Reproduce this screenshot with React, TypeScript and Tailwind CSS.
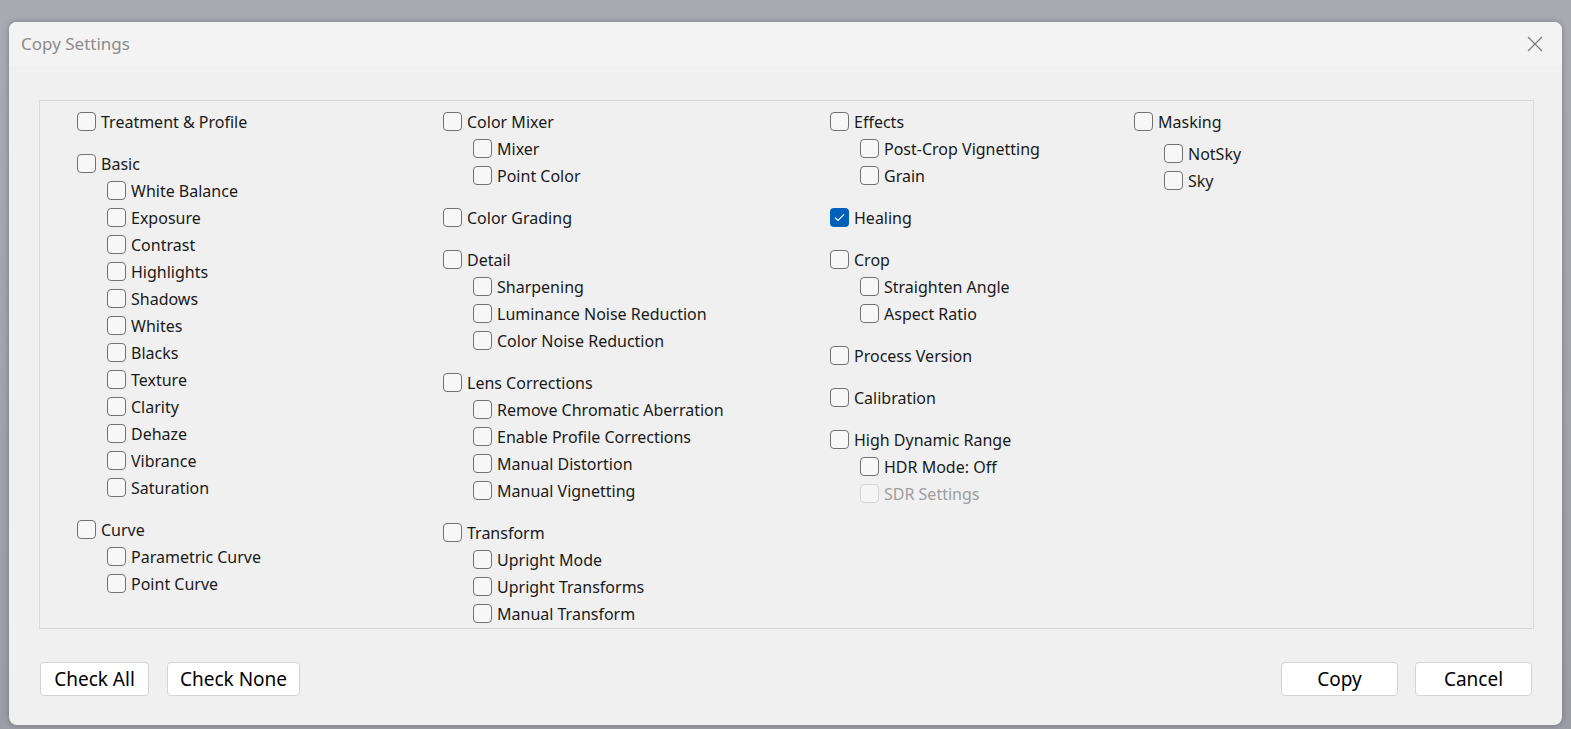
import React from "react";

interface Item {
  label: string;
  checked?: boolean;
  disabled?: boolean;
  children?: Item[];
  childGap?: string;
}

const columns: Item[][] = [
  [
    { label: "Treatment & Profile" },
    {
      label: "Basic",
      children: [
        { label: "White Balance" },
        { label: "Exposure" },
        { label: "Contrast" },
        { label: "Highlights" },
        { label: "Shadows" },
        { label: "Whites" },
        { label: "Blacks" },
        { label: "Texture" },
        { label: "Clarity" },
        { label: "Dehaze" },
        { label: "Vibrance" },
        { label: "Saturation" },
      ],
    },
    {
      label: "Curve",
      children: [{ label: "Parametric Curve" }, { label: "Point Curve" }],
    },
  ],
  [
    {
      label: "Color Mixer",
      children: [{ label: "Mixer" }, { label: "Point Color" }],
    },
    { label: "Color Grading" },
    {
      label: "Detail",
      children: [
        { label: "Sharpening" },
        { label: "Luminance Noise Reduction" },
        { label: "Color Noise Reduction" },
      ],
    },
    {
      label: "Lens Corrections",
      children: [
        { label: "Remove Chromatic Aberration" },
        { label: "Enable Profile Corrections" },
        { label: "Manual Distortion" },
        { label: "Manual Vignetting" },
      ],
    },
    {
      label: "Transform",
      children: [
        { label: "Upright Mode" },
        { label: "Upright Transforms" },
        { label: "Manual Transform" },
      ],
    },
  ],
  [
    {
      label: "Effects",
      children: [{ label: "Post-Crop Vignetting" }, { label: "Grain" }],
    },
    { label: "Healing", checked: true },
    {
      label: "Crop",
      children: [{ label: "Straighten Angle" }, { label: "Aspect Ratio" }],
    },
    { label: "Process Version" },
    { label: "Calibration" },
    {
      label: "High Dynamic Range",
      children: [
        { label: "HDR Mode: Off" },
        { label: "SDR Settings", disabled: true },
      ],
    },
  ],
  [
    {
      label: "Masking",
      childGap: "mt-[5px]",
      children: [{ label: "NotSky" }, { label: "Sky" }],
    },
  ],
];

function CheckBox({ checked, disabled }: { checked?: boolean; disabled?: boolean }) {
  if (checked) {
    return (
      <span className="flex h-[19px] w-[19px] shrink-0 items-center justify-center rounded-[4px] bg-[#005fb8]">
        <svg width="11" height="9" viewBox="0 0 11 9" fill="none">
          <path d="M1 4.6 L4 7.5 L10 1.3" stroke="white" strokeWidth="1.1" />
        </svg>
      </span>
    );
  }
  return (
    <span
      className={
        disabled
          ? "h-[19px] w-[19px] shrink-0 rounded-[4px] border border-[#d4d4d4] bg-[#f5f5f5]"
          : "h-[19px] w-[19px] shrink-0 rounded-[4px] border border-[#727272] bg-[#f7f7f7]"
      }
    />
  );
}

function Row({ item }: { item: Item }) {
  return (
    <div className="flex h-[27px] items-center gap-[5px]">
      <CheckBox checked={item.checked} disabled={item.disabled} />
      <span className={item.disabled ? "text-[#9d9d9d]" : "text-[#1a1a1a]"}>{item.label}</span>
    </div>
  );
}

function Group({ item }: { item: Item }) {
  return (
    <div className="flex flex-col">
      <Row item={item} />
      {item.children && (
        <div className={`flex flex-col pl-[30px] ${item.childGap ?? ""}`}>
          {item.children.map((c) => (
            <Row key={c.label} item={c} />
          ))}
        </div>
      )}
    </div>
  );
}

export default function App() {
  return (
    <div
      className="h-[729px] w-[1571px] overflow-hidden bg-gradient-to-b from-[#a9aab2] to-[#9c9da5] pl-[9px] pt-[22px]"
      style={{ fontFamily: '"Noto Sans", "Open Sans", sans-serif' }}
    >
      <div className="flex h-[703px] w-[1553px] flex-col overflow-hidden rounded-[8px] bg-[#f0f0f0] shadow-[0_0_6px_rgba(0,0,0,0.25)]">
        {/* title bar */}
        <div className="flex h-[44px] shrink-0 items-center justify-between bg-[#f3f3f3] pl-[12px] pr-[19px]">
          <span className="text-[17px] text-[#8c8c8c]">Copy Settings</span>
          <svg width="16" height="16" viewBox="0 0 16 16" fill="none">
            <path d="M1 1 L15 15 M15 1 L1 15" stroke="#7a7a7a" strokeWidth="1.2" />
          </svg>
        </div>

        <div className="flex flex-1 flex-col pl-[30px] pr-[28px] pt-[34px]">
          {/* settings panel */}
          <div className="h-[529px] border border-[#d9d9d9] pl-[37px] pt-[7px]">
            <div className="grid grid-cols-[366px_387px_304px_1fr] text-[16px]">
              {columns.map((col, i) => (
                <div key={i} className="flex flex-col gap-[15px]">
                  {col.map((g) => (
                    <Group key={g.label} item={g} />
                  ))}
                </div>
              ))}
            </div>
          </div>

          {/* buttons */}
          <div className="mt-[33px] flex items-center justify-between pl-px pr-[2px]">
            <div className="flex gap-[18px]">
              <button className="h-[34px] w-[109px] rounded-[4px] border border-[#d3d3d3] bg-white text-[19px] text-black">
                Check All
              </button>
              <button className="h-[34px] w-[133px] rounded-[4px] border border-[#d3d3d3] bg-white text-[19px] text-black">
                Check None
              </button>
            </div>
            <div className="flex gap-[17px]">
              <button className="h-[34px] w-[117px] rounded-[4px] border border-[#d3d3d3] bg-white text-[19px] text-black">
                Copy
              </button>
              <button className="h-[34px] w-[117px] rounded-[4px] border border-[#d3d3d3] bg-white text-[19px] text-black">
                Cancel
              </button>
            </div>
          </div>
        </div>
      </div>
    </div>
  );
}
